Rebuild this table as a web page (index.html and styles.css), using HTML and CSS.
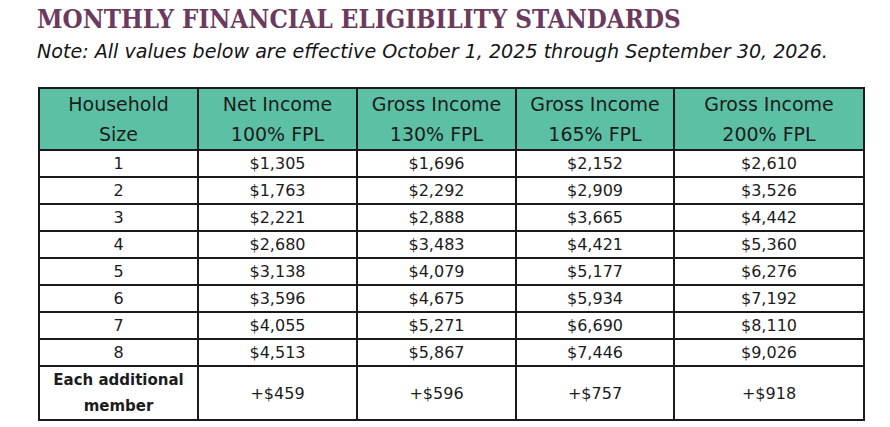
FILE: index.html
```html
<!DOCTYPE html>
<html>
<head>
<meta charset="utf-8">
<link rel="stylesheet" href="styles.css">
</head>
<body>
<div class="page">
  <h1 class="title">MONTHLY FINANCIAL ELIGIBILITY STANDARDS</h1>
  <p class="note">Note: All values below are effective October 1, 2025 through September 30, 2026.</p>
  <table class="fpl">
    <colgroup>
      <col class="c1"><col class="c2"><col class="c3"><col class="c4"><col class="c5">
    </colgroup>
    <thead>
      <tr>
        <th>Household<br>Size</th>
        <th>Net Income<br>100% FPL</th>
        <th>Gross Income<br>130% FPL</th>
        <th>Gross Income<br>165% FPL</th>
        <th>Gross Income<br>200% FPL</th>
      </tr>
    </thead>
    <tbody>
      <tr><td>1</td><td>$1,305</td><td>$1,696</td><td>$2,152</td><td>$2,610</td></tr>
      <tr><td>2</td><td>$1,763</td><td>$2,292</td><td>$2,909</td><td>$3,526</td></tr>
      <tr><td>3</td><td>$2,221</td><td>$2,888</td><td>$3,665</td><td>$4,442</td></tr>
      <tr><td>4</td><td>$2,680</td><td>$3,483</td><td>$4,421</td><td>$5,360</td></tr>
      <tr><td>5</td><td>$3,138</td><td>$4,079</td><td>$5,177</td><td>$6,276</td></tr>
      <tr><td>6</td><td>$3,596</td><td>$4,675</td><td>$5,934</td><td>$7,192</td></tr>
      <tr><td>7</td><td>$4,055</td><td>$5,271</td><td>$6,690</td><td>$8,110</td></tr>
      <tr><td>8</td><td>$4,513</td><td>$5,867</td><td>$7,446</td><td>$9,026</td></tr>
      <tr class="extra"><td class="lbl">Each additional<br>member</td><td>+$459</td><td>+$596</td><td>+$757</td><td>+$918</td></tr>
    </tbody>
  </table>
</div>
</body>
</html>
```
FILE: styles.css
```css
html, body {
  margin: 0;
  padding: 0;
  background: #ffffff;
}
.page {
  padding: 4px 0 0 37px;
}
.title {
  margin: 0;
  font-family: "DejaVu Serif", serif;
  font-stretch: condensed;
  font-weight: bold;
  font-size: 25.7px;
  line-height: 30px;
  color: #6b3a5e;
}
.note {
  margin: 6px 0 0 0;
  font-family: "DejaVu Sans", sans-serif;
  font-style: italic;
  font-size: 19.1px;
  line-height: 24px;
  color: #151515;
}
.fpl {
  margin: 23px 0 0 1px;
  border-collapse: collapse;
  width: 825px;
  table-layout: fixed;
  font-family: "DejaVu Sans", sans-serif;
  color: #1c1c1c;
}
.c1, .c2, .c3 { width: 159px; }
.c4 { width: 158px; }
.c5 { width: 190px; }
.fpl th, .fpl td {
  border: 2px solid #1a1a1a;
  text-align: center;
  padding: 0;
}
.fpl th {
  background: #5cc1a4;
  font-weight: normal;
  font-size: 19px;
  line-height: 30px;
  height: 57px;
}
.fpl td {
  font-size: 16px;
  line-height: 25px;
  height: 25px;
}
.fpl .extra td {
  height: 46px;
}
.fpl .lbl {
  font-weight: bold;
  font-size: 15px;
  line-height: 26px;
}
```
